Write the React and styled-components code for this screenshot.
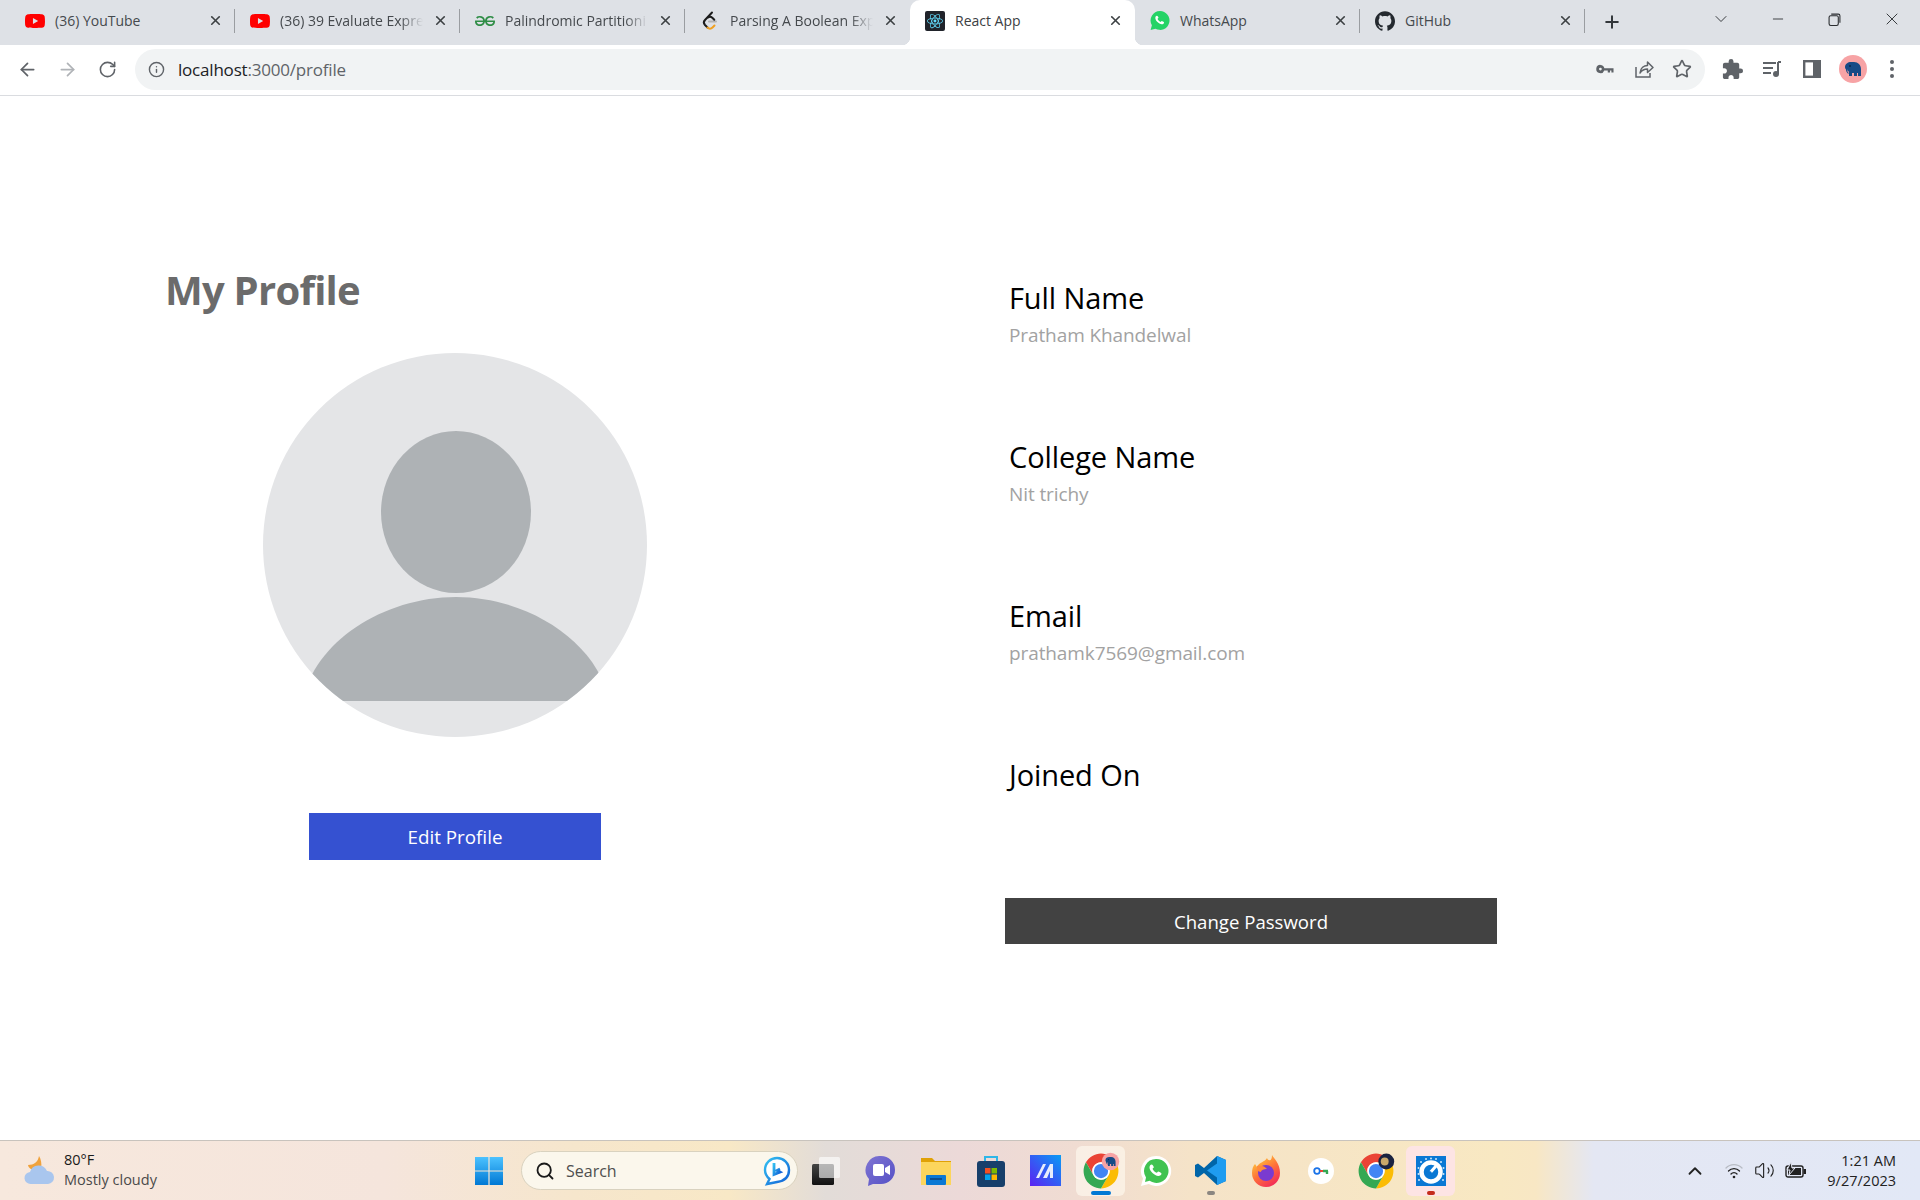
import React from 'react';
import styled, { createGlobalStyle } from 'styled-components';
import { SiYoutube, SiGeeksforgeeks, SiReact, SiGithub } from 'react-icons/si';
import { ArrowLeft, ArrowRight, RotateCw, Info, Star, ChevronDown, ChevronUp, Minus, X, Plus, Search as SearchGlyph, Volume2 } from 'lucide-react';
import { MdExtension } from 'react-icons/md';

const Global = createGlobalStyle`
  html, body { margin: 0; padding: 0; background: #fff; }
  body { font-family: "Open Sans", "Noto Sans", sans-serif; }
  * { box-sizing: border-box; }
`;

const Page = styled.div`
  width: 1920px; height: 1200px; display: flex; flex-direction: column; overflow: hidden; background: #fff;
`;
const TabStrip = styled.div`
  height: 45px; background: #dee1e6; display: flex; align-items: stretch; padding-left: 10px; flex: none;
`;
const Tab = styled.div`
  width: 225px; height: 45px; display: flex; align-items: center; padding: 0 12px 4px 15px; gap: 10px; position: relative;
  background: ${p => (p.$active ? '#fff' : 'transparent')};
  border-radius: ${p => (p.$active ? '10px 10px 0 0' : '0')};
  color: ${p => (p.$active ? '#3c4043' : '#45494d')};
  ${p => p.$divider && `&::after { content: ''; position: absolute; right: 0; top: 9px; height: 24px; width: 1px; background: #9a9da1; }`}
  ${p => p.$active && `
    &::before { content: ''; position: absolute; left: -8px; bottom: 0; width: 8px; height: 8px; background: radial-gradient(circle at 0 0, transparent 8px, #fff 8.5px); }
  `}
`;
const TabCornerRight = styled.span`
  position: absolute; right: -8px; bottom: 0; width: 8px; height: 8px; background: radial-gradient(circle at 100% 0, transparent 8px, #fff 8.5px);
`;
const Fav = styled.span`
  width: 20px; height: 20px; display: flex; align-items: center; justify-content: center; flex: none;
`;
const TabTitle = styled.span`
  flex: 1; min-width: 0; white-space: nowrap; font-size: 14px; line-height: 20px;
  ${p => p.$faded && `
    -webkit-mask-image: linear-gradient(90deg, #000 84%, transparent 100%);
    mask-image: linear-gradient(90deg, #000 84%, transparent 100%);
  `}
`;
const TabClose = styled(X)`
  width: 15px; height: 15px; flex: none; color: #3c4043; stroke-width: 2.6;
`;
const NewTab = styled.div`
  width: 54px; display: flex; align-items: center; justify-content: center; color: #33373b; padding-bottom: 1px;
`;
const WindowControls = styled.div`
  margin-left: auto; display: flex; align-items: center; height: 38px; color: #2a2d30;
`;
const WinBtn = styled.div`
  width: 57px; display: flex; justify-content: center; align-items: center;
`;
const Toolbar = styled.div`
  height: 51px; flex: none; background: #fff; border-bottom: 1px solid #dadce0; display: flex; align-items: center; padding: 0 0 2px 0; position: relative;
`;
const NavGroup = styled.div`
  display: flex; width: 135px; padding-left: 7px; align-items: center;
`;
const NavBtn = styled.div`
  width: 40px; display: flex; justify-content: center; color: ${p => (p.$dim ? '#b0b3b7' : '#5f6368')};
`;
const Omnibox = styled.div`
  width: 1570px; height: 41px; border-radius: 21px; background: #f1f3f4; display: flex; align-items: center; padding: 0 12px 0 13px;
`;
const Url = styled.span`
  margin-left: 13px; font-size: 17px; color: #202124; flex: 1; letter-spacing: -0.2px;
`;
const UrlDim = styled.span` color: #5f6368; `;
const OmniIcons = styled.div`
  display: flex; align-items: center; gap: 16px; color: #5f6368; margin-right: 1px;
`;
const ToolIcons = styled.div`
  display: flex; align-items: center; margin-left: 7px; color: #5f6368;
`;
const ToolBtn = styled.div`
  width: 40px; display: flex; justify-content: center; align-items: center;
`;
const Avatar = styled.div`
  width: 28px; height: 28px; margin-left: 1px; border-radius: 50%; background: #f7a3a5; display: flex; align-items: center; justify-content: center;
`;

const Content = styled.main`
  flex: 1; display: grid; grid-template-columns: 910px 1fr; padding-top: 166px; background: #fff; min-height: 0;
`;
const LeftCol = styled.section`
  display: flex; flex-direction: column; align-items: center;
`;
const Heading = styled.h1`
  align-self: flex-start; margin: 0 0 0 165px; font-size: 40px; line-height: 56px; font-weight: 700; color: #6b6b6b; letter-spacing: -0.75px;
`;
const Photo = styled.svg`
  width: 384px; height: 384px; margin-top: 35px; display: block;
`;
const EditButton = styled.button`
  width: 292px; height: 47px; margin-top: 76px; border: 0; background: #3551d1; color: #fff; font: 400 18.8px "Open Sans", sans-serif; padding: 1px 0 0;
`;
const RightCol = styled.section`
  display: flex; flex-direction: column; padding-left: 99px;
`;
const Field = styled.div`
  height: 159px; padding-top: 16px;
`;
const Label = styled.div`
  font-size: 29px; line-height: 40px; color: #000; letter-spacing: -0.1px;
`;
const Value = styled.div`
  font-size: 19px; line-height: 30px; color: #a2a2a2; margin-top: 2px; letter-spacing: -0.1px;
`;
const PasswordButton = styled.button`
  width: 492px; height: 46px; margin: 0 0 0 -4px; border: 0; background: #424242; color: #fff; font: 400 18.6px "Open Sans", sans-serif; padding: 1px 0 0;
`;

const Taskbar = styled.footer`
  height: 60px; flex: none; display: flex; align-items: center; position: relative; border-top: 1px solid #c8c3bd;
  background: linear-gradient(90deg, #f7e8dd 0%, #f5e5dc 20%, #f6e6cc 30%, #f8e8c6 38%, #e2dcd8 43%, #ecd9d8 50%, #f0dcd2 56%, #f5e3c8 62%, #f8e8c2 78%, #f8e7c4 80%, #e4e7f3 83%, #e2e8f6 100%);
`;
const Weather = styled.div`
  width: 461px; display: flex; align-items: center; padding-left: 22px; gap: 8px;
`;
const WeatherText = styled.div`
  font-size: 14.5px; line-height: 20px; color: #4a4a4a; margin-top: -2px;
`;
const Temp = styled.div` color: #1a1a1a; `;
const TaskIcon = styled.div`
  width: 55px; height: 50px; display: flex; align-items: center; justify-content: center; position: relative; flex: none;
  ${p => p.$start && 'margin-right: 5px;'}
  ${p => p.$tile && `
    &::before { content: ''; position: absolute; inset: 0 3px; border-radius: 6px; background: ${p.$tile}; }
    & > * { position: relative; }
  `}
`;
const Indicator = styled.span`
  position: absolute !important; bottom: 1px; left: 50%; transform: translateX(-50%); height: 4px; border-radius: 2px;
  width: ${p => (p.$short ? '8px' : '20px')};
  background: ${p => p.$color};
`;
const SearchBox = styled.div`
  width: 277px; height: 39px; border-radius: 20px; background: #fbf7ec; border: 1px solid #d9d2bf; display: flex; align-items: center; padding: 0 6px 0 13px; gap: 11px; flex: none;
`;
const SearchText = styled.span`
  flex: 1; font-size: 16px; color: #4f4f4f;
`;
const Tray = styled.div`
  margin-left: auto; display: flex; align-items: center; color: #222;
`;
const TrayIcon = styled.div`
  width: 31px; display: flex; justify-content: center; align-items: center;
  ${p => p.$wide && 'margin-right: 8px;'}
`;
const Clock = styled.div`
  width: 72px; margin: 0 24px 0 13px; text-align: right; font-size: 14.5px; line-height: 20px; color: #222; white-space: nowrap;
`;

const ChromeLogo = ({ size = 38, badge }) => (
  <svg width={size} height={size} viewBox="0 0 48 48">
    {[['#ea4335', 0], ['#fbbc04', 120], ['#34a853', 240]].map(([c, r]) => (
      <path key={c} fill={c} transform={`rotate(${r} 24 24)`} d="M24 13H43.05A22 22 0 0 0 4.95 13L14.5 29.5A11 11 0 0 1 24 13Z" />
    ))}
    <circle cx="24" cy="24" r="11" fill="#fff" />
    <circle cx="24" cy="24" r="9" fill="#4285f4" />
    {badge}
  </svg>
);

const LeetFav = () => (
  <svg width="20" height="20" viewBox="0 0 20 20" fill="none" strokeLinecap="round" strokeLinejoin="round">
    <path d="M12 1.500L5 9c-1.500 1.600-1.500 3.400 0 5l2.500 2.500" stroke="#1c1c1c" strokeWidth="2" />
    <path d="M7.500 16.500c1.500 1.500 3.500 1.500 5 0l2-2" stroke="#f0a020" strokeWidth="2" />
    <path d="M9 10.500h7" stroke="#b3b3b3" strokeWidth="2" />
    <path d="M8 6.500c1.300-1 3-1 4.300.2l2 2" stroke="#1c1c1c" strokeWidth="2" />
  </svg>
);

const WhatsFav = () => (
  <svg width="21" height="21" viewBox="0 0 32 32">
    <path fill="#25d366" d="M16 1a15 15 0 0 0-13 22.500L1 31l7.700-2A15 15 0 1 0 16 1z" />
    <path fill="#fff" d="M11 8.500c-1 0-2.500 1.200-2.500 3.500s1.800 4.700 3.500 6.400 4.500 3.600 6.800 3.600 3.700-1.500 3.700-3c0-.5-3.100-2.300-3.800-2.300-.6 0-1.200 1.500-1.900 1.500-1.200 0-4.600-3.400-4.600-4.600 0-.7 1.400-1.300 1.400-1.900 0-.7-1.500-3.200-2.600-3.200z" />
  </svg>
);

const tabs = [
  { title: '(36) YouTube', icon: <SiYoutube size={20} color="#f00" />, divider: true },
  { title: '(36) 39 Evaluate Expre', faded: true, icon: <SiYoutube size={20} color="#f00" />, divider: true },
  { title: 'Palindromic Partitioni', faded: true, icon: <SiGeeksforgeeks size={20} color="#2f8d46" />, divider: true },
  { title: 'Parsing A Boolean Exp', faded: true, icon: <LeetFav /> },
  { title: 'React App', active: true, icon: (
    <svg width="20" height="20" viewBox="0 0 20 20"><rect width="20" height="20" rx="2" fill="#20232a" /><g transform="translate(2 2)"><SiReact size={16} color="#61dafb" /></g></svg>
  ) },
  { title: 'WhatsApp', icon: <WhatsFav />, divider: true },
  { title: 'GitHub', icon: <SiGithub size={20} color="#24292f" />, divider: true },
];

const fields = [
  { label: 'Full Name', value: 'Pratham Khandelwal' },
  { label: 'College Name', value: 'Nit trichy' },
  { label: 'Email', value: 'prathamk7569@gmail.com' },
  { label: 'Joined On', value: '' },
];

const Elephant = ({ s = 20 }) => (
  <svg width={s} height={s} viewBox="0 0 20 20"><path fill="#174a86" d="M2 8c0-3 3-5 6-5h3c4 0 7 3 7 7v7h-3v-3h-1v3h-3v-3H9v3H6v-4c-1-1-1.500-2-1.500-3v2.500c0 .8.500 1 1 1v1.500C3.500 13.500 3 12 3 10.500 2.500 10 2 9 2 8z" /><circle cx="7" cy="7" r=".9" fill="#0a2244" /></svg>
);

export default function App() {
  return (
    <Page>
      <Global />
      <TabStrip>
        {tabs.map(t => (
          <Tab key={t.title} $active={t.active} $divider={t.divider}>
            <Fav>{t.icon}</Fav>
            <TabTitle $faded={t.faded}>{t.title}</TabTitle>
            <TabClose />
            {t.active && <TabCornerRight />}
          </Tab>
        ))}
        <NewTab><Plus size={20} strokeWidth={2.4} /></NewTab>
        <WindowControls>
          <WinBtn><ChevronDown size={20} strokeWidth={1.1} /></WinBtn>
          <WinBtn><Minus size={16} strokeWidth={1.3} /></WinBtn>
          <WinBtn>
            <svg width="13" height="13" viewBox="0 0 12 12" fill="none" stroke="currentColor"><rect x="1" y="2.500" width="8.500" height="9" rx="1.500" /><path d="M3 1h6.500A1.500 1.500 0 0 1 11 2.500V9" /></svg>
          </WinBtn>
          <WinBtn><X size={20} strokeWidth={1.1} /></WinBtn>
        </WindowControls>
      </TabStrip>
      <Toolbar>
        <NavGroup>
          <NavBtn><ArrowLeft size={21} /></NavBtn>
          <NavBtn $dim><ArrowRight size={21} /></NavBtn>
          <NavBtn><RotateCw size={19} /></NavBtn>
        </NavGroup>
        <Omnibox>
          <Info size={17} color="#5f6368" />
          <Url>localhost<UrlDim>:3000/profile</UrlDim></Url>
          <OmniIcons>
            <svg width="22" height="22" viewBox="0 0 24 24" fill="#5f6368"><path d="M7 7.500a4.500 4.500 0 1 0 4.200 6H15v2.200h2.500v-2.200H19v2.200h2.300v-4.400h-10A4.500 4.500 0 0 0 7 7.500zm0 3a1.500 1.500 0 1 1 0 3 1.500 1.500 0 0 1 0-3z" /></svg>
            <svg width="24" height="24" viewBox="0 0 24 24" fill="none" stroke="#5f6368" strokeWidth="1.500"><path d="M4 10v10h14v-4" /><path d="M8 16c.5-5 4-7.500 7.500-7.500V5l5.500 5.500-5.500 5V12c-3 0-5.500 1-7.500 4z" strokeLinejoin="round" /></svg>
            <Star size={20} />
          </OmniIcons>
        </Omnibox>
        <ToolIcons>
          <ToolBtn><MdExtension size={23} color="#5f6368" /></ToolBtn>
          <ToolBtn>
            <svg width="22" height="22" viewBox="0 0 22 22" fill="none" stroke="#5f6368" strokeWidth="2"><path d="M2 5h13M2 10h10M2 15h8" /><path d="M17 4v12" /><circle cx="15" cy="16" r="2" fill="#5f6368" /><path d="M17 4h3" /></svg>
          </ToolBtn>
          <ToolBtn>
            <svg width="18" height="18" viewBox="0 0 18 18"><rect x="1.200" y="1.200" width="15.600" height="15.600" fill="none" stroke="#5f6368" strokeWidth="2.400" /><rect x="10" y="1" width="7" height="16" fill="#5f6368" /></svg>
          </ToolBtn>
          <ToolBtn><Avatar><Elephant /></Avatar></ToolBtn>
          <ToolBtn>
            <svg width="4" height="18" viewBox="0 0 4 18" fill="#5f6368"><circle cx="2" cy="2" r="2" /><circle cx="2" cy="9" r="2" /><circle cx="2" cy="16" r="2" /></svg>
          </ToolBtn>
        </ToolIcons>
      </Toolbar>
      <Content>
        <LeftCol>
          <Heading>My Profile</Heading>
          <Photo viewBox="0 0 384 384">
            <defs><clipPath id="disc"><circle cx="192" cy="192" r="192" /></clipPath></defs>
            <circle cx="192" cy="192" r="192" fill="#e4e5e7" />
            <ellipse cx="193" cy="159" rx="75" ry="81" fill="#aeb2b5" />
            <path clipPath="url(#disc)" fill="#aeb2b5" d="M40 348C50 290 120 244 193 244C266 244 335 290 346 348Z" />
          </Photo>
          <EditButton>Edit Profile</EditButton>
        </LeftCol>
        <RightCol>
          {fields.map(f => (
            <Field key={f.label}>
              <Label>{f.label}</Label>
              {f.value && <Value>{f.value}</Value>}
            </Field>
          ))}
          <PasswordButton>Change Password</PasswordButton>
        </RightCol>
      </Content>
      <Taskbar>
        <Weather>
          <svg width="34" height="34" viewBox="0 0 34 34">
            <path fill="#f0a23c" d="M17 2c-1 6-5 9-11 9 1 5 8 7 13 3 1-4 0-9-2-12z" />
            <path fill="#a9c6ee" d="M9 30a6 6 0 0 1-1-12 9 9 0 0 1 17-1 6.500 6.500 0 0 1 1 13z" />
          </svg>
          <WeatherText><Temp>80°F</Temp>Mostly cloudy</WeatherText>
        </Weather>
        <TaskIcon $start>
          <svg width="30" height="30" viewBox="0 0 30 30"><defs><linearGradient id="win" x1="0" y1="0" x2="0" y2="1"><stop offset="0" stopColor="#4cc2ff" /><stop offset="1" stopColor="#0078d4" /></linearGradient></defs><path fill="url(#win)" d="M1 1h13.400v13.400H1zM15.600 1H29v13.400H15.600zM1 15.600h13.400V29H1zM15.600 15.600H29V29H15.600z" /></svg>
        </TaskIcon>
        <SearchBox>
          <SearchGlyph size={20} color="#1a1a1a" strokeWidth={2.2} />
          <SearchText>Search</SearchText>
          <svg width="28" height="30" viewBox="0 0 28 30"><defs><linearGradient id="bing" x1="0" y1="0" x2="1" y2="1"><stop offset="0" stopColor="#35c1f1" /><stop offset="1" stopColor="#0f5fd6" /></linearGradient></defs><path fill="#fff" stroke="url(#bing)" strokeWidth="2.400" d="M14 2c6.500 0 12 5 12 12s-5 11-12 12l-10 2 2.500-5C3 20 2 17 2 14 2 7 7.500 2 14 2z" /><path fill="none" stroke="url(#bing)" strokeWidth="2.800" d="M11 7v11.500l6-2.400-3-1.600 3-1.400" /></svg>
        </SearchBox>
        <TaskIcon>
          <svg width="30" height="30" viewBox="0 0 30 30"><defs><linearGradient id="tv" x1="0" y1="0" x2="0" y2="1"><stop offset="0" stopColor="#444" /><stop offset="1" stopColor="#111" /></linearGradient></defs><rect x="1" y="8" width="22" height="21" rx="1.500" fill="url(#tv)" /><rect x="8" y="1" width="21" height="21" rx="1.500" fill="#fff" fillOpacity=".62" /></svg>
        </TaskIcon>
        <TaskIcon>
          <svg width="32" height="34" viewBox="0 0 32 34"><defs><linearGradient id="meet" x1="0" y1="0" x2="1" y2="1"><stop offset="0" stopColor="#7f74d2" /><stop offset="1" stopColor="#5450c6" /></linearGradient></defs><path fill="url(#meet)" d="M16 2a14 14 0 0 1 0 28H8l-5 2 1-7A14 14 0 0 1 16 2z" /><rect x="8" y="10" width="11" height="12" rx="2" fill="#fff" /><path fill="#fff" d="M20 14l5-3v10l-5-3z" /></svg>
        </TaskIcon>
        <TaskIcon>
          <svg width="32" height="30" viewBox="0 0 32 30"><path fill="#e0a106" d="M1 2h11l3 3h16v6H1z" /><rect x="1" y="6" width="30" height="23" fill="#fcd55c" /><rect x="6" y="19" width="20" height="10" rx="1" fill="#0a78d4" /><rect x="10" y="22" width="12" height="2" fill="#0b4f91" /></svg>
        </TaskIcon>
        <TaskIcon>
          <svg width="30" height="34" viewBox="0 0 30 34"><path fill="none" stroke="#2eb6e8" strokeWidth="2" d="M9 10V3h12v7" /><rect x="1" y="7" width="28" height="26" rx="3" fill="#173f6b" /><rect x="9" y="14" width="5.500" height="5.500" fill="#f25022" /><rect x="15.500" y="14" width="5.500" height="5.500" fill="#7fba00" /><rect x="9" y="20.500" width="5.500" height="5.500" fill="#00a4ef" /><rect x="15.500" y="20.500" width="5.500" height="5.500" fill="#ffb900" /></svg>
        </TaskIcon>
        <TaskIcon>
          <svg width="31" height="31" viewBox="0 0 31 31"><defs><linearGradient id="mm" x1="0" y1="1" x2="1" y2="0"><stop offset="0" stopColor="#5b21f2" /><stop offset="1" stopColor="#0a9cf5" /></linearGradient></defs><rect width="31" height="31" fill="url(#mm)" /><path fill="#e8edfc" d="M6 23l7-14h3l-7 14zM13 23l7-14h3v14h-3v-7l-3 7z" /></svg>
        </TaskIcon>
        <TaskIcon $tile="rgba(255,250,240,.62)">
          <ChromeLogo size={38} badge={<g><circle cx="36" cy="12" r="11" fill="#f7a3a5" /><g transform="translate(28 4)"><Elephant s={16} /></g></g>} />
          <Indicator $color="#0078d4" />
        </TaskIcon>
        <TaskIcon>
          <svg width="32" height="32" viewBox="0 0 32 32"><path fill="#fff" d="M16 1a15 15 0 0 0-13 22.500L1 31l7.700-2A15 15 0 1 0 16 1z" /><path fill="#40c351" d="M16 4a12 12 0 0 0-10 18.500L5 27l4.600-1.200A12 12 0 1 0 16 4z" /><path fill="#fff" d="M11.500 9.500c-.8 0-2 1-2 3s1.500 4 3 5.500 4 3 5.800 3 3.200-1.300 3.200-2.500c0-.5-2.700-2-3.300-2-.5 0-1 1.300-1.600 1.300-1 0-4-3-4-4 0-.6 1.200-1.100 1.200-1.600 0-.6-1.300-2.700-2.300-2.700z" /></svg>
        </TaskIcon>
        <TaskIcon>
          <svg width="31" height="31" viewBox="0 0 31 31"><path fill="#0065a9" d="M22 1L9 13 3 8.500 0 10v11l3 1.500L9 18l13 12 9-4V5z" /><path fill="#1f9cf0" d="M22 1l9 4v21l-9 4zM22 8.500L12 15.500 22 22.500z" /></svg>
          <Indicator $short $color="#8b8680" />
        </TaskIcon>
        <TaskIcon>
          <svg width="30" height="34" viewBox="0 0 30 34"><defs><linearGradient id="fx" x1="0.2" y1="0" x2="0.8" y2="1"><stop offset="0" stopColor="#ffd43a" /><stop offset="0.5" stopColor="#ff7139" /><stop offset="1" stopColor="#f1245c" /></linearGradient></defs><path fill="url(#fx)" d="M21 1c2 4 8 8 8 18a14 14 0 0 1-28 0c0-4 1-7 3-9l2 3c2-5 8-5 10-9 1 3 5 4 5-3z" /><circle cx="15" cy="19" r="8" fill="#7a3bd0" /><path fill="#ff8a3c" d="M6 12c4-1 8 0 10 3-3 0-6 1-6 3-3 0-4-3-4-6z" /></svg>
        </TaskIcon>
        <TaskIcon>
          <svg width="26" height="26" viewBox="0 0 26 26"><circle cx="13" cy="13" r="13" fill="#fff" /><circle cx="9" cy="13" r="2.800" fill="none" stroke="#1a73e8" strokeWidth="1.800" /><path stroke="#ea4335" strokeWidth="2" d="M12 13h3" /><path stroke="#34a853" strokeWidth="2.400" d="M15 13h5M19 13v3" /></svg>
        </TaskIcon>
        <TaskIcon>
          <ChromeLogo size={38} badge={<g><circle cx="37" cy="12" r="10" fill="#1a2340" /><circle cx="35" cy="12" r="5" fill="#c9a86a" /></g>} />
        </TaskIcon>
        <TaskIcon $tile="#fde4e4">
          <svg width="30" height="30" viewBox="0 0 30 30"><rect width="30" height="30" fill="#0a78d4" /><circle cx="15" cy="16" r="9.500" fill="none" stroke="#fff" strokeWidth="4.500" /><path stroke="#fff" strokeWidth="3" d="M13 18l7-8" /><circle cx="13" cy="18" r="3" fill="#0a78d4" /><g fill="#cfe6f8"><circle cx="5" cy="6" r="1" /><circle cx="10" cy="3" r="1" /><circle cx="15" cy="2.500" r="1" /><circle cx="20" cy="3" r="1" /><circle cx="25" cy="6" r="1" /><circle cx="2.500" cy="12" r="1" /><circle cx="27.500" cy="12" r="1" /><circle cx="2.500" cy="18" r="1" /><circle cx="27.500" cy="18" r="1" /><circle cx="3" cy="24" r="1" /><circle cx="27" cy="24" r="1" /></g></svg>
          <Indicator $short $color="#c42b1c" />
        </TaskIcon>
        <Tray>
          <TrayIcon $wide><ChevronUp size={22} strokeWidth={2} /></TrayIcon>
          <TrayIcon>
            <svg width="20" height="18" viewBox="0 0 20 18" fill="none" strokeLinecap="round"><path d="M2 6a11 11 0 0 1 16 0" stroke="#b8bcc4" strokeWidth="1.300" /><path d="M4.500 9a7.500 7.500 0 0 1 11 0" stroke="#222" strokeWidth="1.300" /><path d="M7 12a4 4 0 0 1 6 0" stroke="#222" strokeWidth="1.300" /><circle cx="10" cy="15" r="1.300" fill="#222" /></svg>
          </TrayIcon>
          <TrayIcon><Volume2 size={21} strokeWidth={1.3} /></TrayIcon>
          <TrayIcon>
            <svg width="22" height="18" viewBox="0 0 22 18"><rect x="1" y="4" width="17" height="11" rx="2" fill="none" stroke="#222" strokeWidth="1.400" /><rect x="3" y="6" width="13" height="7" fill="#222" /><rect x="18.500" y="7" width="2.500" height="5" fill="#222" /><path fill="#222" stroke="#e4e7f3" d="M6 0L2 8h3l-1 5 6-7H7z" /></svg>
          </TrayIcon>
          <Clock>1:21 AM<br />9/27/2023</Clock>
        </Tray>
      </Taskbar>
    </Page>
  );
}
